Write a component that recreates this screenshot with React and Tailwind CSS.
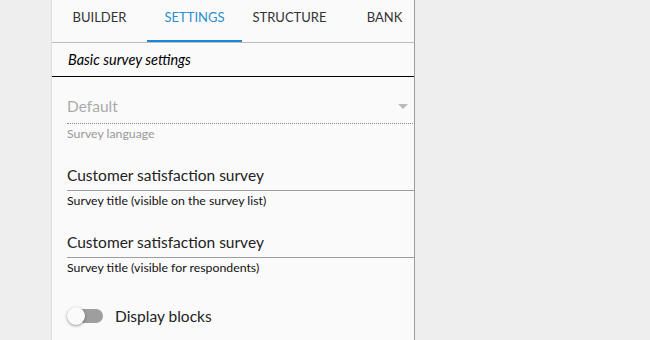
import { useState } from 'react';

const tabs = ['Builder', 'Settings', 'Structure', 'Bank'];

function Field({ value, label }) {
    return (
        <div className="mt-[24px]">
            <div className="text-[15.5px] leading-[20px] text-[#222] pb-[5px] border-b border-[#9e9e9e]">{value}</div>
            <div className="mt-[3px] text-[12.3px] leading-[14px] text-[#111]">{label}</div>
        </div>
    );
}

export default function App() {
    const [active] = useState('Settings');
    const [blocks, setBlocks] = useState(false);

    return (
        <div className="w-[650px] h-[340px] flex bg-[#eeeeee] overflow-hidden" style={{ fontFamily: 'Lato, "Open Sans", sans-serif' }}>
            <div className="w-[51px] shrink-0" />
            <div className="w-[364px] shrink-0 h-full flex flex-col bg-[#fafafa] border-l border-[#dddddd] border-r border-r-[#9e9e9e]">
                {/* tabs */}
                <div className="h-[43px] flex overflow-hidden border-b border-[#bdbdbd]">
                    {tabs.map((t) => (
                        <div
                            key={t}
                            className={
                                t === active
                                    ? 'w-[95px] shrink-0 h-[42px] pt-[8px] text-center uppercase text-[13px] text-[#2c8ed0] border-b-2 border-[#1a88d6]'
                                    : 'w-[95px] shrink-0 h-[42px] pt-[8px] text-center uppercase text-[13px] text-[#333]'
                            }
                        >
                            {t}
                        </div>
                    ))}
                </div>

                {/* section header */}
                <div className="h-[34px] flex items-center pl-[16px] border-b border-black text-[14.5px] italic text-black">
                    Basic survey settings
                </div>

                <div className="pl-[15px]">
                    {/* language select */}
                    <div className="mt-[19px] mr-[1px] pb-[7px] flex items-center justify-between border-b border-dotted border-[#888]">
                        <span className="text-[15.5px] leading-[20px] text-[#aaa]">Default</span>
                        <span className="mr-[5px] w-0 h-0 border-l-[5px] border-r-[5px] border-t-[5px] border-l-transparent border-r-transparent border-t-[#bbb]" />
                    </div>
                    <div className="mt-[3px] text-[12.3px] leading-[14px] text-[#999]">Survey language</div>

                    <Field value="Customer satisfaction survey" label="Survey title (visible on the survey list)" />
                    <Field value="Customer satisfaction survey" label="Survey title (visible for respondents)" />

                    {/* toggle */}
                    <div className="mt-[31px] flex items-center gap-[12px]">
                        <button
                            onClick={() => setBlocks(!blocks)}
                            className="relative w-[36px] h-[18px] flex items-center"
                        >
                            <span className="ml-[4px] w-[32px] h-[14px] rounded-full bg-[#9e9e9e]" />
                            <span className="absolute left-0 top-0 w-[18px] h-[18px] rounded-full bg-[#fafafa] shadow-[0_1px_3px_rgba(0,0,0,0.4)]" />
                        </button>
                        <span className="text-[15.5px] leading-[20px] text-[#222]">Display blocks</span>
                    </div>
                </div>
            </div>
        </div>
    );
}
